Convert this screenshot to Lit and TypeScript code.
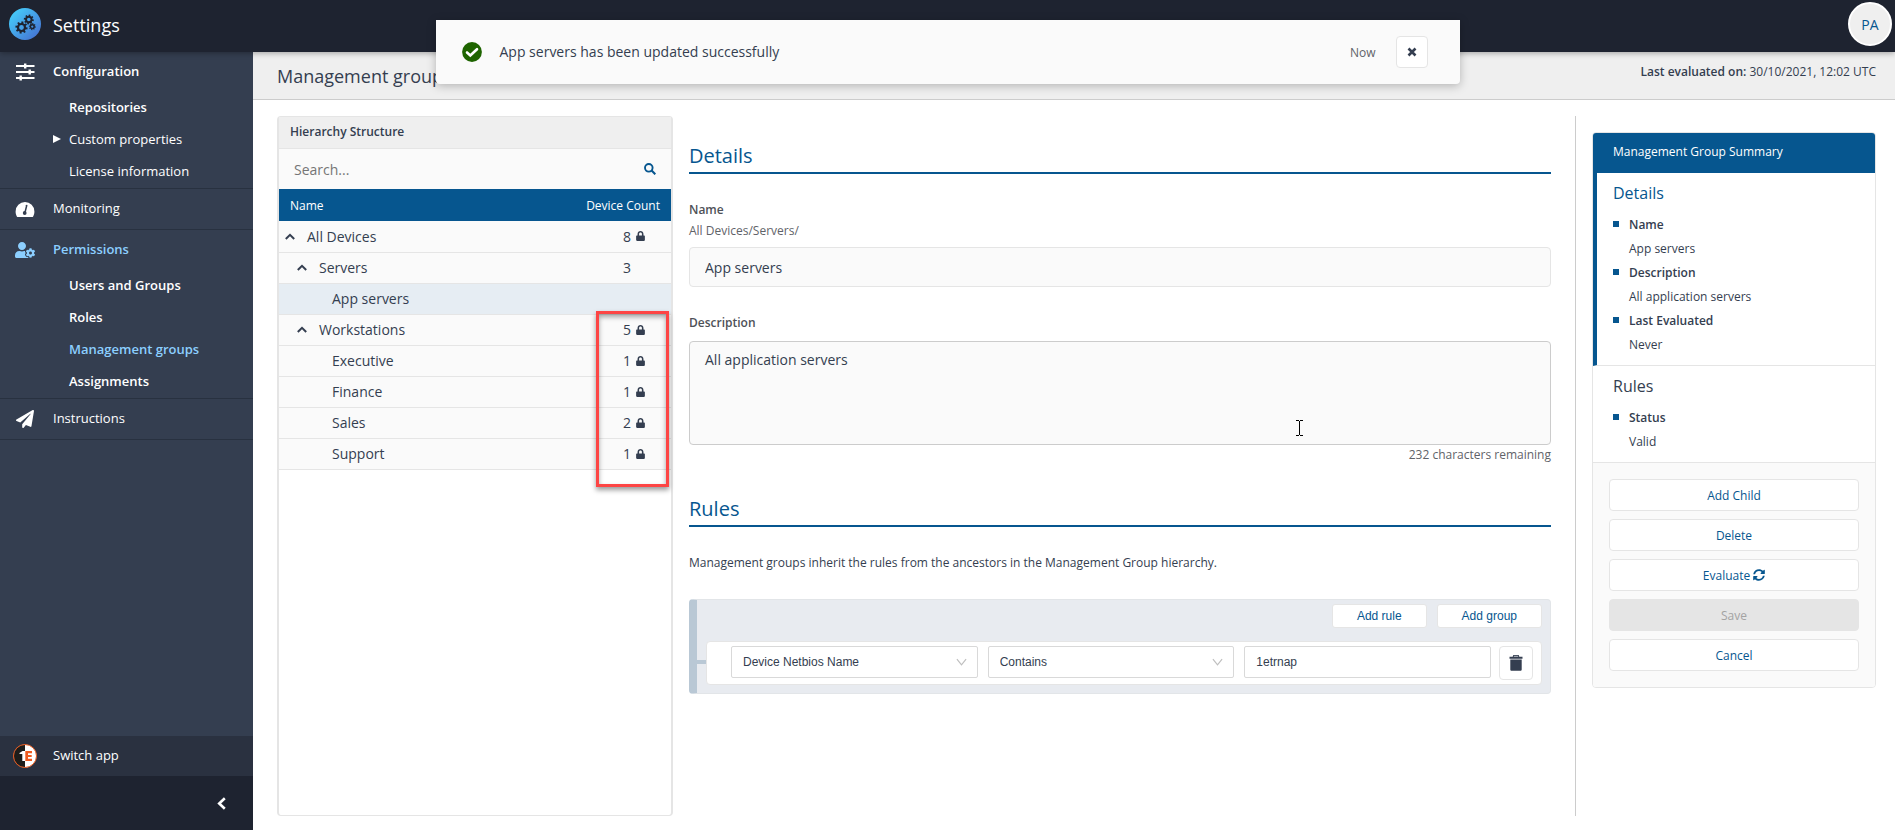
import { LitElement, html, css, svg, nothing } from "lit";
import { customElement, state } from "lit/decorators.js";
import { classMap } from "lit/directives/class-map.js";

const tooth = (n: number, cx: number, cy: number, r: number, w: number, h: number) =>
  Array.from({ length: n }, (_, i) =>
    svg`<rect x=${cx - w / 2} y=${cy - r - h} width=${w} height=${h + 1} transform="rotate(${(i * 360) / n + 10} ${cx} ${cy})"/>`);

const gear = (n: number, cx: number, cy: number, r: number, w: number, h: number, sw: number) => svg`
  <circle cx=${cx} cy=${cy} r=${r - sw / 2} fill="none" stroke="currentColor" stroke-width=${sw}/>
  <g fill="currentColor">${tooth(n, cx, cy, r, w, h)}</g>`;

const logo = html`<svg class="logo" viewBox="0 0 32 32" aria-hidden="true">
  <defs><linearGradient id="g" x1="0" y1="0" x2="1" y2="1">
    <stop offset="0" stop-color="#45d8ff"/><stop offset="1" stop-color="#4569cf"/></linearGradient></defs>
  <circle cx="16" cy="16" r="16" fill="url(#g)"/>
  ${gear(8, 12.5, 19.5, 4.6, 2, 1.5, 2.2)}
  ${gear(8, 19.8, 11.5, 3.7, 1.7, 1.3, 1.9)}
  ${gear(8, 23.3, 18.6, 2.5, 1.2, 1, 1.3)}
</svg>`;

const icons: Record<string, unknown> = {
  sliders: html`<svg class="nav-icon" viewBox="0 0 20 18" aria-hidden="true"><path fill="currentColor"
    d="M1 2h8V0.5h2.4V2H19.500v2h-8.1v1.500H9V4H1zM1 8h12.500V6.500h2.400V8H19.500v2h-3.600v1.500h-2.400V10H1zM1 14h3.500v-1.500h2.400V14H19.500v2H6.900v1.500H4.500V16H1z"/></svg>`,
  gauge: html`<svg class="nav-icon" viewBox="0 0 20 18" aria-hidden="true">
    <path fill="currentColor" d="M10 2a9.400 9.400 0 0 0-9.400 9.400c0 2 .5 3.800 1.400 5.300.2.200.4.300.7.300h14.600c.3 0 .5-.1.700-.3.900-1.500 1.400-3.300 1.400-5.300A9.400 9.400 0 0 0 10 2z"/>
    <path stroke="#343e50" stroke-width="1.500" stroke-linecap="round" d="M11.700 5.500 10 12.500"/>
    <circle cx="9.700" cy="13" r="1.900" fill="#343e50"/></svg>`,
  userGear: html`<svg class="nav-icon" viewBox="0 0 640 512" aria-hidden="true"><path fill="currentColor" d="M610.500 373.300c2.600-14.100 2.600-28.500 0-42.600l25.800-14.900c3-1.700 4.300-5.200 3.300-8.500-6.700-21.600-18.200-41.200-33.200-57.400-2.300-2.500-6-3.100-9-1.400l-25.800 14.900c-10.900-9.300-23.400-16.500-36.900-21.300v-29.800c0-3.400-2.400-6.400-5.700-7.100-22.300-5-45-4.800-66.200 0-3.300.7-5.700 3.700-5.700 7.100v29.800c-13.500 4.800-26 12-36.900 21.300l-25.800-14.900c-2.900-1.700-6.700-1.100-9 1.400-15 16.200-26.500 35.800-33.200 57.400-1 3.300.4 6.800 3.300 8.500l25.800 14.900c-2.600 14.100-2.600 28.500 0 42.600l-25.800 14.900c-3 1.700-4.300 5.200-3.300 8.500 6.700 21.600 18.200 41.100 33.200 57.400 2.300 2.500 6 3.100 9 1.400l25.800-14.900c10.900 9.300 23.400 16.500 36.900 21.300v29.800c0 3.400 2.400 6.400 5.700 7.100 22.300 5 45 4.800 66.200 0 3.300-.7 5.700-3.700 5.700-7.100v-29.800c13.500-4.800 26-12 36.900-21.300l25.800 14.900c2.900 1.700 6.700 1.100 9-1.400 15-16.200 26.500-35.800 33.200-57.400 1-3.300-.4-6.800-3.300-8.500l-25.800-14.900zM496 400.500c-26.800 0-48.500-21.800-48.500-48.500s21.800-48.500 48.500-48.500 48.500 21.800 48.500 48.500-21.700 48.500-48.500 48.500zM224 256c70.700 0 128-57.300 128-128S294.700 0 224 0 96 57.300 96 128s57.300 128 128 128zm201.200 226.500c-2.300-1.200-4.600-2.600-6.800-3.900l-7.900 4.600c-6 3.400-12.800 5.300-19.600 5.300-10.900 0-21.400-4.600-28.900-12.600-18.300-19.800-32.300-43.900-40.200-69.600-5.500-17.700 1.900-36.400 17.900-45.700l7.900-4.600c-.1-2.600-.1-5.200 0-7.800l-7.900-4.600c-16-9.200-23.400-28-17.900-45.700.9-2.900 2.200-5.800 3.200-8.700-3.800-.3-7.500-1.200-11.400-1.200h-16.700c-22.200 10.200-46.900 16-72.900 16s-50.600-5.800-72.900-16h-16.700C60.200 288 0 348.200 0 422.400V464c0 26.500 21.500 48 48 48h352c10.100 0 19.500-3.200 27.200-8.500-1.200-3.800-2-7.700-2-11.800v-9.200z"/></svg>`,
  plane: html`<svg class="nav-icon" viewBox="0 0 512 512" aria-hidden="true"><path fill="currentColor" d="M476 3.200L12.500 270.600c-18.100 10.400-15.800 35.600 2.200 43.200L121 358.400l287.300-253.200c5.500-4.900 13.300 2.600 8.600 8.300L176 407v80.500c0 23.600 28.500 32.900 42.500 15.800L282 426l124.600 52.200c14.200 6 30.400-2.900 33-18.200l72-432C515 7.800 493.300-6.800 476 3.200z"/></svg>`,
};

const lock = html`<svg class="lock" viewBox="0 0 448 512" role="img" aria-label="Locked"><path fill="currentColor" d="M400 224h-24v-72C376 68.200 307.800 0 224 0S72 68.200 72 152v72H48c-26.500 0-48 21.500-48 48v192c0 26.500 21.500 48 48 48h352c26.500 0 48-21.500 48-48V272c0-26.500-21.500-48-48-48zm-104 0H152v-72c0-39.700 32.300-72 72-72s72 32.300 72 72v72z"/></svg>`;
const caret = html`<svg class="caret" viewBox="0 0 10 7" aria-hidden="true"><path fill="none" stroke="currentColor" stroke-width="2" d="M.8 6 5 1.800 9.200 6"/></svg>`;
const chevDown = html`<svg class="chev" viewBox="0 0 12 8" aria-hidden="true"><path fill="none" stroke="#bfbfbf" stroke-width="1.300" d="M1 .8 6 7 11 .8"/></svg>`;

interface NavItem { label: string; icon: string; bold?: boolean; active?: boolean; subs?: { label: string; light?: boolean; arrow?: boolean; active?: boolean }[] }
const nav: NavItem[] = [
  { label: "Configuration", icon: "sliders", bold: true, subs: [
    { label: "Repositories" }, { label: "Custom properties", light: true, arrow: true }, { label: "License information", light: true }] },
  { label: "Monitoring", icon: "gauge" },
  { label: "Permissions", icon: "userGear", bold: true, active: true, subs: [
    { label: "Users and Groups" }, { label: "Roles" }, { label: "Management groups", active: true }, { label: "Assignments" }] },
  { label: "Instructions", icon: "plane" },
];

interface Row { name: string; level: number; open?: boolean; count?: number; locked?: boolean }
const rows: Row[] = [
  { name: "All Devices", level: 0, open: true, count: 8, locked: true },
  { name: "Servers", level: 1, open: true, count: 3 },
  { name: "App servers", level: 2 },
  { name: "Workstations", level: 1, open: true, count: 5, locked: true },
  { name: "Executive", level: 2, count: 1, locked: true },
  { name: "Finance", level: 2, count: 1, locked: true },
  { name: "Sales", level: 2, count: 2, locked: true },
  { name: "Support", level: 2, count: 1, locked: true },
];

const base = css`
  *, *::before, *::after { box-sizing: border-box; }
  h1, h2, h3, p, ul, dl, dd { margin: 0; padding: 0; font-weight: 400; }
  ul { list-style: none; }
  a { color: inherit; text-decoration: none; }
  button, input, textarea, select { font: inherit; color: inherit; margin: 0; }
  button { cursor: pointer; }
  svg { display: block; flex: none; }
`;

@customElement("side-nav")
class SideNav extends LitElement {
  static styles = [base, css`
    :host { display: flex; flex-direction: column; background: #343e50; color: #fff; font-size: 13px; font-weight: 500; }
    nav { flex: 1; }
    .group { border-bottom: 1px solid #283140; }
    .top { display: flex; align-items: center; height: 40px; padding-left: 15px; gap: 18px; }
    .top span, .switch span { padding-bottom: 2px; }
    .nav-icon { width: 20px; height: 18px; }
    .bold { font-weight: 600; }
    .sub { display: flex; align-items: center; height: 32px; padding: 0 0 2px 53px; font-weight: 600; }
    .sub::before { content: ""; width: 16px; }
    .arrow::before { width: 8px; margin-right: 8px; border-left: 8px solid #fff; border-top: 4px solid transparent; border-bottom: 4px solid transparent; }
    .light { font-weight: 500; }
    .active { color: #8ccfff; }
    .switch { display: flex; align-items: center; gap: 16px; height: 40px; padding-left: 13px; background: #2a3140; }
    .badge { width: 24px; height: 24px; }
    .collapse { height: 54px; display: flex; justify-content: flex-end; align-items: center; padding: 0 27px; border: 0; background: #1e2330; color: #fff; width: 100%; }
    .back { width: 9px; height: 13px; }
  `];
  render() {
    return html`
      <nav aria-label="Settings">${nav.map((n) => html`
        <div class="group">
          <a href="#" class=${classMap({ top: true, bold: !!n.bold, active: !!n.active })}>${icons[n.icon]}<span>${n.label}</span></a>
          ${n.subs ? html`<ul>${n.subs.map((s) => html`<li><a href="#" class=${classMap({ sub: true, light: !!s.light, arrow: !!s.arrow, active: !!s.active })}>${s.label}</a></li>`)}</ul>` : nothing}
        </div>`)}
      </nav>
      <a class="switch" href="#">
        <svg class="badge" viewBox="0 0 24 24" aria-hidden="true">
          <circle cx="12" cy="12" r="11.500" fill="#fff"/>
          <path d="M12 .5a11.500 11.500 0 0 0 0 23z" fill="#1d1d1b"/>
          <circle cx="12" cy="12" r="11.500" fill="none" stroke="#e8581c" stroke-width="1"/>
          <path d="M6.500 9 9.500 7H12v10H9.300v-7H6.500z" fill="#fff"/>
          <path d="M12.300 7H19v2.200h-4v1.700h3.700V13H15v1.800h4V17h-6.700z" fill="#f05a1e"/>
        </svg><span>Switch app</span></a>
      <button class="collapse" aria-label="Collapse menu"><svg class="back" viewBox="0 0 9 13" aria-hidden="true"><path fill="none" stroke="currentColor" stroke-width="2.600" d="M7.800 1.200 2.200 6.500 7.800 11.800"/></svg></button>`;
  }
}

@customElement("group-tree")
class GroupTree extends LitElement {
  static styles = [base, css`
    :host { display: flex; flex-direction: column; border: 2px solid #e5e5e5; border-top-width: 1px; border-bottom-width: 1px; border-radius: 4px; background: #fff; position: relative; }
    h2 { height: 32px; line-height: 30px; padding: 0 11px; font-size: 12px; font-weight: 600; background: #efefef; border-bottom: 1px solid #e5e5e5; }
    .search { display: flex; align-items: center; height: 40px; padding: 0 15px; background: #fafafa; }
    .search input { flex: 1; min-width: 0; border: 0; outline: 0; padding: 0; background: none; font-size: 14px; }
    .search input::placeholder { color: #757575; opacity: 1; }
    .glass { width: 12px; height: 12px; color: #06568f; }
    .go { border: 0; padding: 0; background: none; }
    table { border-collapse: collapse; width: 100%; }
    th { height: 32px; padding: 0 11px; background: #06568f; color: #fff; font-size: 12px; font-weight: 500; text-align: left; }
    th.right { text-align: right; }
    td { height: 31px; padding: 0; border-bottom: 1px solid #e5e5e5; background: #fafafa; font-size: 14px; }
    .sel td { background: #e6edf3; }
    .name { display: flex; align-items: center; gap: 12px; }
    .l0 { padding-left: 6px; } .l1 { padding-left: 18px; } .l2 { padding-left: 53px; }
    .caret { width: 10px; height: 7px; }
    .fold { border: 0; padding: 0; background: none; color: #343e50; }
    .count { display: flex; align-items: center; justify-content: flex-end; gap: 5px; padding-right: 26px; }
    .plain { padding-right: 40px; }
    .lock { width: 9px; height: 10px; color: #343e50; }
    .mark { position: absolute; right: 2px; top: 194px; width: 73px; height: 176px; border: 3px solid #fd4544; pointer-events: none; box-shadow: 0 3px 5px rgba(0,0,0,.4), inset 0 3px 5px rgba(0,0,0,.35); }
  `];
  render() {
    return html`
      <h2>Hierarchy Structure</h2>
      <form class="search" role="search">
        <input type="text" aria-label="Search" placeholder="Search..." />
        <button class="go" type="button" aria-label="Search"><svg class="glass" viewBox="0 0 12 12" aria-hidden="true"><circle cx="4.800" cy="4.800" r="3.800" fill="none" stroke="currentColor" stroke-width="1.900"/><path d="m7.600 7.600 3.700 3.700" stroke="currentColor" stroke-width="2.100"/></svg></button>
      </form>
      <table>
        <thead><tr><th>Name</th><th class="right">Device Count</th></tr></thead>
        <tbody>${rows.map((r) => html`
          <tr class=${classMap({ sel: r.name === "App servers" })}>
            <td><div class="name l${r.level}">${r.open ? html`<button class="fold" aria-label="Collapse ${r.name}">${caret}</button>` : nothing}<span>${r.name}</span></div></td>
            <td>${r.count ? html`<div class=${classMap({ count: true, plain: !r.locked })}><span>${r.count}</span>${r.locked ? lock : nothing}</div>` : nothing}</td>
          </tr>`)}
        </tbody>
      </table>
      <div class="mark"></div>`;
  }
}

@customElement("group-form")
class GroupForm extends LitElement {
  @state() private description = "All application servers";
  static styles = [base, css`
    :host { display: block; font-size: 13px; position: relative; }
    h2 { font-size: 20px; line-height: 28px; color: #06568f; padding: 26px 0 1px; margin-bottom: 26px; height: 58px; border-bottom: 2px solid #06568f; }
    label { display: block; line-height: 20px; margin-bottom: 1px; font-weight: 600; color: #4e5157; font-size: 12px; }
    .path { line-height: 20px; font-size: 12px; color: #5f6369; margin-bottom: 6px; }
    .field, .area { display: block; width: 100%; padding: 0 15px; font-size: 14px; background: #fafafa; border: 1px solid #e5e5e5; border-radius: 4px; outline: 0; }
    .field { height: 40px; margin-bottom: 26px; }
    .area { height: 104px; padding: 8px 15px; line-height: 20px; border-color: #ccc; margin-top: 8px; resize: none; }
    .left { line-height: 20px; font-size: 12px; text-align: right; color: #5f6369; }
    .second { padding-top: 30px; height: 62px; }
    .note { font-size: 12px; line-height: 20px; margin-bottom: 26px; }
    .builder { border: 1px solid #e2e5e8; border-left: 8px solid #b9c8d5; border-radius: 4px; background: #e8ebf0; padding: 4px 8px 8px 9px; font-family: "Liberation Sans", Arial, sans-serif; font-size: 12px; }
    .bar { display: flex; justify-content: flex-end; gap: 10px; }
    .bar button { height: 24px; padding: 0 24px; border: 1px solid #e5e5e5; border-radius: 3px; background: #fff; color: #06568f; }
    .rule { position: relative; display: flex; gap: 10px; margin-top: 13px; padding: 4px 8px 4px 24px; border: 1px solid #e5e5e5; border-radius: 4px; background: #fff; }
    .rule::before { content: ""; position: absolute; left: -11px; top: 18px; width: 10px; height: 4px; background: #b9c8d5; }
    .pick { position: relative; flex: 1 1 0; display: flex; align-items: center; height: 32px; }
    .pick select, .pick input { width: 100%; height: 32px; padding: 0 11px; border: 1px solid #d9d9d9; border-radius: 2px; background: #fff; outline: 0; appearance: none; }
    .chev { position: absolute; right: 11px; top: 12px; width: 11px; height: 8px; pointer-events: none; }
    .trash { width: 34px; height: 34px; display: grid; place-items: center; padding: 0; background: #fff; border: 1px solid #e5e5e5; border-radius: 4px; margin-left: -2px; }
    .bin { width: 14px; height: 16px; }
    .cursor { position: absolute; left: 606px; top: 304px; width: 9px; height: 17px; }
  `];
  render() {
    return html`
      <h2>Details</h2>
      <label for="name">Name</label>
      <p class="path">All Devices/Servers/</p>
      <input class="field" id="name" type="text" .value=${"App servers"} />
      <label for="desc">Description</label>
      <textarea class="area" id="desc" .value=${this.description} @input=${(e: Event) => (this.description = (e.target as HTMLTextAreaElement).value)}></textarea>
      <p class="left">${255 - this.description.length} characters remaining</p>
      <h2 class="second">Rules</h2>
      <p class="note">Management groups inherit the rules from the ancestors in the Management Group hierarchy.</p>
      <div class="builder">
        <div class="bar"><button>Add rule</button><button>Add group</button></div>
        <div class="rule">
          <div class="pick"><select aria-label="Property"><option>Device Netbios Name</option></select>${chevDown}</div>
          <div class="pick"><select aria-label="Operator"><option>Contains</option></select>${chevDown}</div>
          <div class="pick"><input type="text" aria-label="Value" value="1etrnap" /></div>
          <button class="trash" aria-label="Delete rule"><svg class="bin" viewBox="0 0 14 16" aria-hidden="true"><path fill="#343e50" d="M4.300 0h5.400l.6 1.800H13.500v2H.5v-2h3.200zM1.300 4.600h11.400V14.500c0 .8-.5 1.300-1.300 1.300H2.600c-.8 0-1.300-.5-1.300-1.300z"/><path d="M4.800 1.300h4.400" stroke="#b8bcc4" stroke-width="1"/></svg></button>
        </div>
      </div>
      <svg class="cursor" viewBox="0 0 9 17" aria-hidden="true"><path d="M1 .5h3M5 .5h3M1 15.500h3M5 15.500h3M4.500 1v14" stroke="#000" fill="none"/></svg>`;
  }
}

@customElement("group-summary")
class GroupSummary extends LitElement {
  static styles = [base, css`
    :host { display: block; border: 1px solid #e5e5e5; border-radius: 4px; overflow: hidden; background: #fff; font-size: 12px; }
    h2 { height: 40px; line-height: 38px; padding-left: 20px; background: #06568f; color: #fff; font-weight: 500; font-size: 12px; }
    section { padding: 8px 16px 8px 20px; border-bottom: 1px solid #e5e5e5; }
    .current { border-left: 4px solid #06568f; padding-left: 16px; }
    h3 { font-size: 16px; line-height: 24px; margin-bottom: 8px; }
    .current h3 { color: #06568f; }
    dt, dd { line-height: 24px; padding-left: 16px; }
    dt { position: relative; font-weight: 600; }
    dt::before { content: ""; position: absolute; left: 0; top: 8px; width: 6px; height: 6px; background: #06568f; }
    .actions { display: grid; gap: 8px; padding: 16px; background: #fafafa; }
    .actions button { height: 32px; border: 1px solid #e5e5e5; border-radius: 4px; background: #fff; color: #06568f; padding: 0; display: flex; justify-content: center; align-items: center; gap: 3px; }
    .actions button:disabled { background: #e5e5e5; color: #a3a3a3; }
    .sync { width: 12px; height: 12px; }
  `];
  render() {
    return html`
      <h2>Management Group Summary</h2>
      <section class="current"><h3>Details</h3><dl>
        <dt>Name</dt><dd>App servers</dd><dt>Description</dt><dd>All application servers</dd><dt>Last Evaluated</dt><dd>Never</dd></dl></section>
      <section><h3>Rules</h3><dl><dt>Status</dt><dd>Valid</dd></dl></section>
      <div class="actions">
        <button>Add Child</button><button>Delete</button>
        <button>Evaluate <svg class="sync" viewBox="0 0 512 512" aria-hidden="true"><path fill="currentColor" d="M370.700 133.300C339.500 104 298.900 88 255.800 88c-77.500.1-144.300 53.200-162.800 126.900-1.300 5.400-6.100 9.100-11.700 9.100H24.100c-7.500 0-13.200-6.800-11.800-14.200C33.900 94.900 134.800 8 256 8c66.400 0 126.800 26.100 171.300 68.700L463 41c15.100-15.100 41-4.400 41 17v134c0 13.300-10.700 24-24 24H346c-21.400 0-32.100-25.900-17-41zM32 296h134c21.400 0 32.100 25.900 17 41l-41.800 41.800c31.300 29.300 71.800 45.300 114.900 45.300 77.400-.1 144.300-53.100 162.800-126.800 1.300-5.400 6.100-9.100 11.700-9.100h57.300c7.500 0 13.200 6.800 11.800 14.200C478.100 417.100 377.200 504 256 504c-66.400 0-126.800-26.100-171.300-68.700L49 471c-15.100 15.100-41 4.400-41-17V320c0-13.300 10.700-24 24-24z"/></svg></button>
        <button disabled>Save</button><button>Cancel</button>
      </div>`;
  }
}

@customElement("app-root")
class AppRoot extends LitElement {
  static styles = [base, css`
    :host { display: grid; grid-template: 52px minmax(0, 1fr) / 253px minmax(0, 1fr); min-height: 100vh; background: #fff; color: #343e50; font-family: "Open Sans", sans-serif; font-size: 13px; position: relative; }
    header { grid-column: 1 / -1; display: flex; align-items: center; justify-content: space-between; padding: 0 3px 4px 9px; background: #1e2330; color: #fff; box-shadow: 0 1px 6px rgba(0,0,0,.35); z-index: 1; }
    .brand { display: flex; align-items: center; gap: 12px; }
    .brand h1 { font-size: 18px; padding-top: 2px; }
    .logo { width: 32px; height: 32px; color: #1e2330; }
    .avatar { width: 44px; height: 44px; border-radius: 50%; border: 2px solid #fff; background: #efefef; color: #06568f; font-size: 14px; font-weight: 500; padding: 0; }
    main { display: flex; flex-direction: column; }
    .title { display: flex; justify-content: space-between; height: 48px; padding: 0 19px 0 24px; background: #efefef; border-bottom: 1px solid #ccc; }
    .title h2 { font-size: 18px; line-height: 48px; font-weight: 500; }
    .title p { line-height: 40px; font-size: 12px; }
    .title b { font-weight: 600; }
    .cols { flex: 1; display: grid; grid-template-columns: 396px minmax(0, 1fr) 300px; padding: 16px 19px 14px 24px; }
    .mid { padding: 0 24px 0 16px; border-right: 1px solid #ccc; }
    .aside { padding: 16px 0 0 16px; }
    .toast { position: absolute; z-index: 2; top: 20px; left: 50%; transform: translateX(-50%); width: 1024px; max-width: 100%; height: 64px; display: flex; align-items: center; padding: 0 32px 0 26px; background: #fafafa; border-radius: 0 0 4px 4px; box-shadow: 0 2px 10px rgba(0,0,0,.25); font-size: 14px; }
    .toast .msg { flex: 1; padding: 0 0 2px 18px; font-weight: 500; }
    .tick { width: 20px; height: 20px; }
    .now { font-size: 12px; color: #5f6369; }
    .close { width: 32px; height: 32px; margin-left: 20px; padding: 0; display: grid; place-items: center; background: #fff; border: 1px solid #e5e5e5; border-radius: 4px; color: #343e50; }
    .x { width: 10px; height: 10px; }
  `];
  render() {
    return html`
      <header>
        <div class="brand">${logo}<h1>Settings</h1></div>
        <button class="avatar" aria-label="Account PA">PA</button>
      </header>
      <side-nav></side-nav>
      <main>
        <div class="title"><h2>Management groups</h2><p><b>Last evaluated on:</b> 30/10/2021, 12:02 UTC</p></div>
        <div class="cols">
          <group-tree></group-tree>
          <div class="mid"><group-form></group-form></div>
          <div class="aside"><group-summary></group-summary></div>
        </div>
      </main>
      <div class="toast" role="status">
        <svg class="tick" viewBox="0 0 20 20" aria-hidden="true"><circle cx="10" cy="10" r="9.900" fill="#1e6400"/><path d="m5 10.500 3.300 3 6.700-6.300" fill="none" stroke="#fff" stroke-width="2.600" stroke-linecap="round"/></svg>
        <span class="msg">App servers has been updated successfully</span>
        <span class="now">Now</span>
        <button class="close" aria-label="Close"><svg class="x" viewBox="0 0 10 10" aria-hidden="true"><path d="m1.500 1.500 7 7m0-7-7 7" stroke="currentColor" stroke-width="2.600"/></svg></button>
      </div>`;
  }
}
